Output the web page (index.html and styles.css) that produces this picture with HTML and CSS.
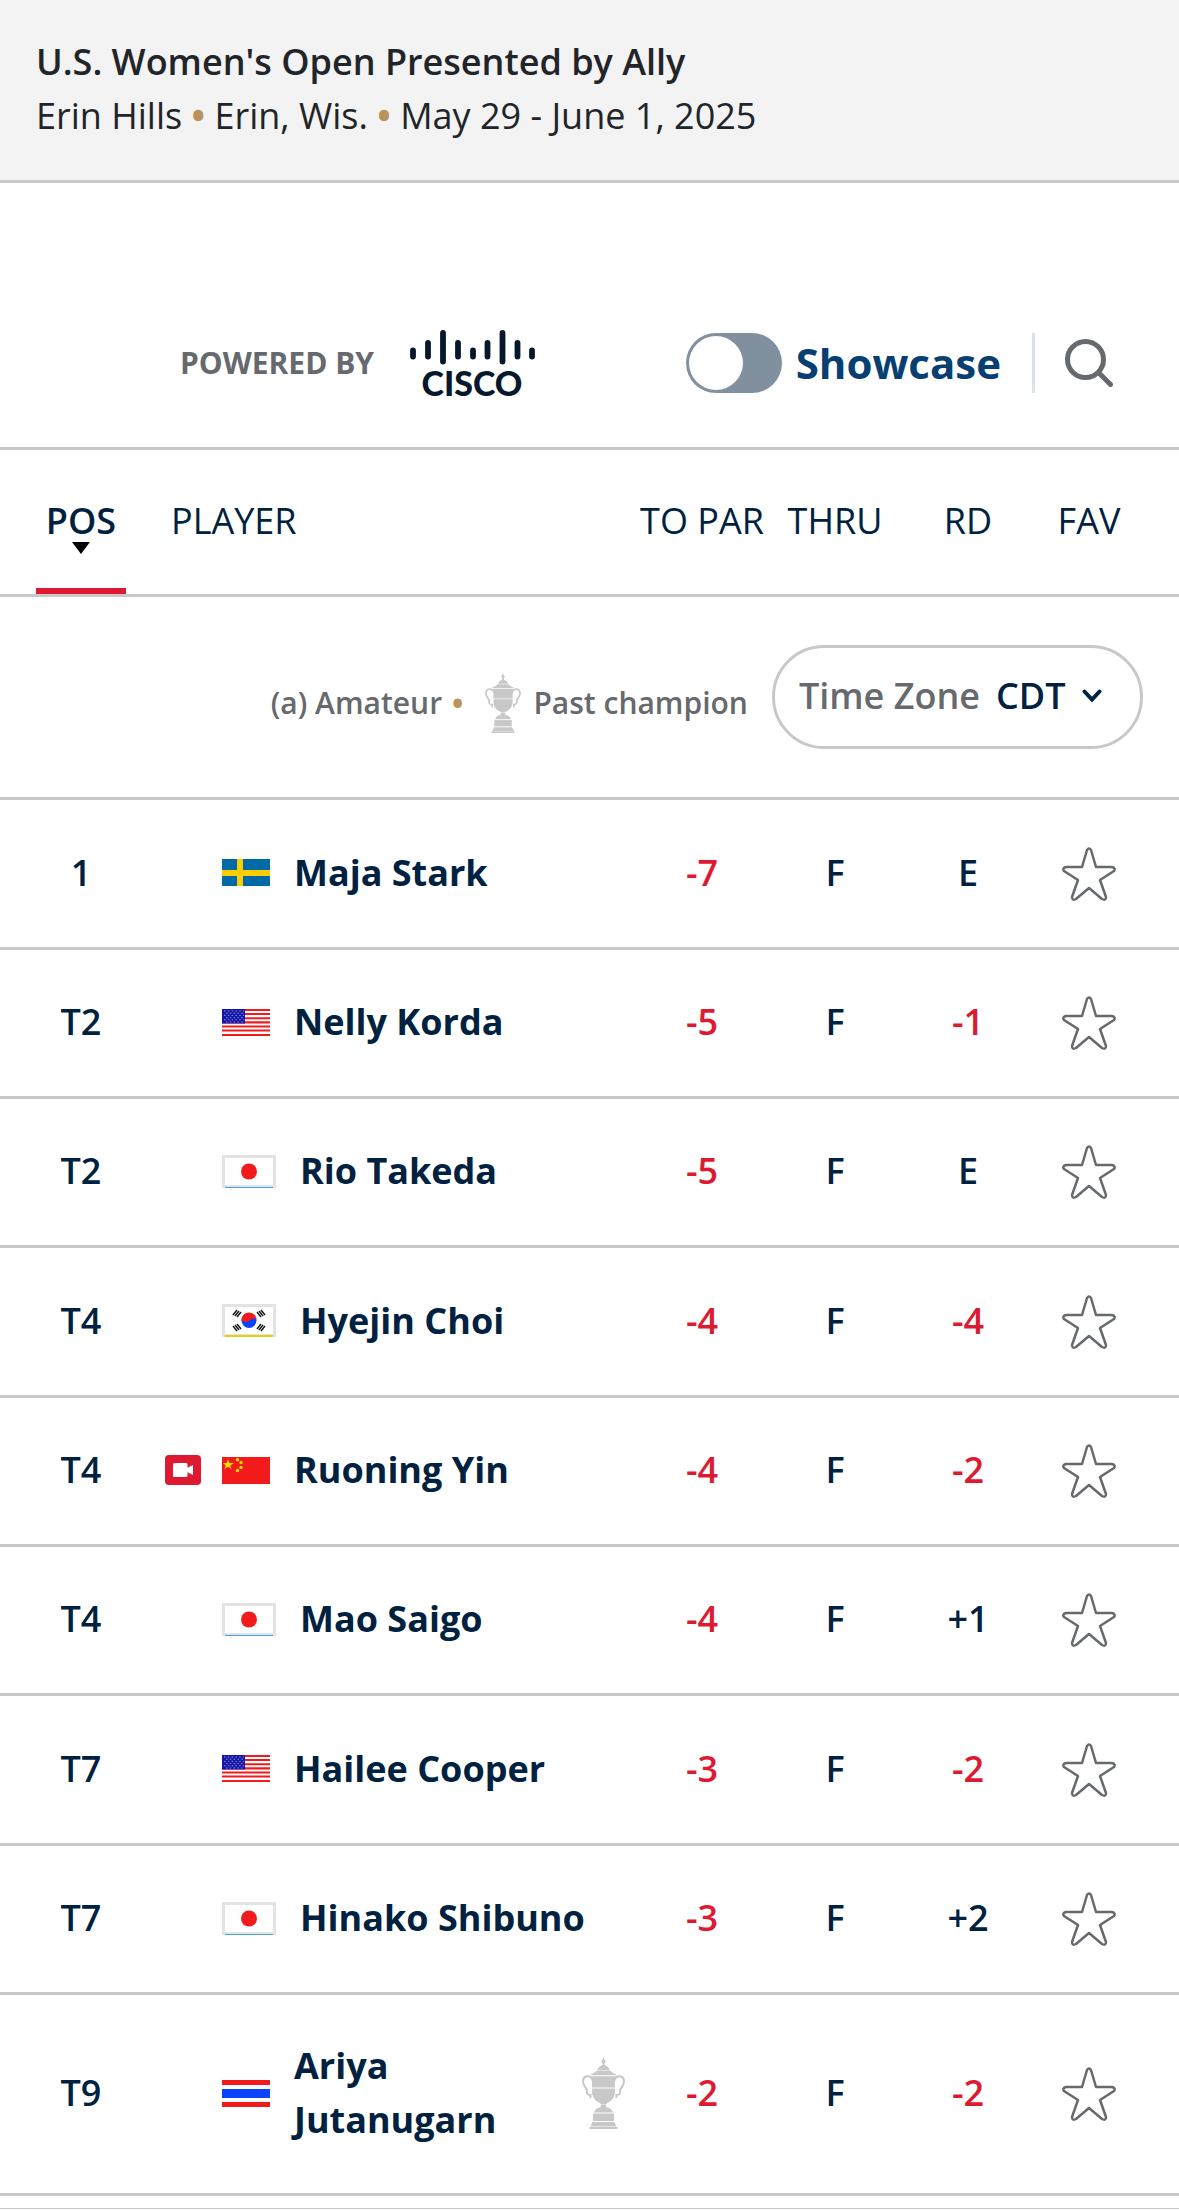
FILE: index.html
```html
<!DOCTYPE html>
<html lang="en">
<head>
    <meta charset="UTF-8">
    <meta name="viewport" content="width=device-width, initial-scale=1.0">
    <title>U.S. Women's Open Leaderboard</title>
    <link rel="stylesheet" href="styles.css">
</head>
<body>
    <!-- shared icons and flags -->
    <svg class="sprite" aria-hidden="true">
        <symbol id="star" viewBox="0 0 54 54">
            <path d="M25 3 Q27 0 29 3 L34 20 L50 20 Q54 21 52 24 L38 33 L44 50 Q44 54 40 52 L27 41 L14 52 Q10 54 10 50 L16 33 L2 24 Q0 21 4 20 L20 20 Z" fill="none" stroke="#66696e" stroke-width="2.5" stroke-linejoin="round"/>
        </symbol>
        <symbol id="trophy" viewBox="0 0 43 72">
            <g fill="#c8c8c8">
                <path d="M21.5 0 L22.4 2.5 L24 4.5 L22.5 6 L22.7 8 Q27 9.500 27.500 13 H15.500 Q16 9.500 20.300 8 L20.500 6 L19 4.500 L20.600 2.500 Z"/>
                <path d="M15 13.600 H28 Q30 16 34 17.200 V18.200 H9 V17.200 Q13 16 15 13.600 Z"/>
                <path d="M9 19.200 H34 L33 22 V30.500 H10 V22 Z"/>
                <path d="M10 31.500 H33 Q34 43 24.500 46.500 L24 47.500 H19 L18.500 46.500 Q9 43 10 31.500 Z"/>
                <path d="M18.500 48 H24.500 L24 50 Q30 51 31 55.500 H12 Q13 51 19 50 Z"/>
                <path d="M11 56.500 H32 V64 H11 Z"/>
                <path d="M10.500 65 H32.500 L34.500 69.500 H8.500 Z"/>
                <path d="M7.500 70 H35.500 V72 H7.500 Z"/>
            </g>
            <path d="M11 24 Q9 18.500 4 19.500 Q0 21 1.500 27 L5 33 Q4 38 8.500 38 M8.500 37 V41 M32 24 Q34 18.500 39 19.500 Q43 21 41.500 27 L38 33 Q39 38 34.500 38 M34.500 37 V41" fill="none" stroke="#c8c8c8" stroke-width="2"/>
        </symbol>
        <symbol id="flag-se" viewBox="0 0 48 27">
            <path fill="#006aa7" d="M0 0H48V27H0z"/>
            <path fill="#fecc00" d="M15 0h6v27h-6zM0 11h48v6H0z"/>
        </symbol>
        <symbol id="flag-us" viewBox="0 0 48 27">
            <path fill="#fff" d="M0 0H48V27H0z"/>
            <path stroke="#f21a1a" stroke-width="2.1" d="M0 1H48M0 5H48M0 9.200H48M0 13.400H48M0 17.500H48M0 21.500H48M0 26H48"/>
            <path fill="#1414a8" d="M0 0H23V14.500H0z"/>
            <path stroke="#8f93dd" stroke-width="1" stroke-dasharray="1.500 2.300" d="M2 2H22M4 4.200H22M2 6.400H22M4 8.600H22M2 10.800H22M4 13H22"/>
        </symbol>
        <symbol id="flag-jp" viewBox="0 0 54 33">
            <path fill="#e2e3e4" d="M0 0H54V33H0z"/>
            <path fill="#fff" d="M3 3H51V30H3z"/>
            <circle cx="27" cy="16.500" r="8" fill="#f21a1a"/>
            <path fill="#4aa3d4" d="M3 32H51V33H3z"/>
        </symbol>
        <symbol id="flag-kr" viewBox="0 0 54 33">
            <path fill="#e2e3e4" d="M0 0H54V33H0z"/>
            <path fill="#fff" d="M3 3H51V30H3z"/>
            <circle cx="27" cy="16.500" r="7.500" fill="#0a44ff"/>
            <path fill="#f21a1a" d="M19.500 16.500 A7.500 7.500 0 0 1 34.500 15.500 Q31 13 27.500 16.500 Q23.500 20 19.500 16.500z"/>
            <g stroke="#111" stroke-width="1.400">
                <path d="M11 11l4-5M13 12l4-5M15 13l4-5M35 8l4 5M37 7l4 5M39 6l4 5M11 22l4 5M13 21l4 5M15 20l4 5M35 25l4-5M37 26l4-5M39 27l4-5"/>
            </g>
            <path fill="#e8cf0c" d="M3 31H51V33H3z"/>
        </symbol>
        <symbol id="flag-cn" viewBox="0 0 48 27">
            <path fill="#f21a1a" d="M0 0H48V27H0z"/>
            <path fill="#ffde00" d="M6 2l1.300 4H12L8.300 8.500 9.600 12 6 9.800 2.400 12l1.300-3.500L1 6h3.700z"/>
            <circle cx="15.500" cy="2.700" r="1.700" fill="#ffde00"/>
            <circle cx="19" cy="5.500" r="1.700" fill="#ffde00"/>
            <circle cx="19" cy="10.500" r="1.700" fill="#ffde00"/>
            <circle cx="15.500" cy="13.500" r="1.700" fill="#ffde00"/>
        </symbol>
        <symbol id="flag-th" viewBox="0 0 48 27">
            <path fill="#fff" d="M0 0H48V27H0z"/>
            <path fill="#f21a1a" d="M0 0H48V5H0zM0 22H48V27H0z"/>
            <path fill="#0a44ff" d="M0 9H48V18H0z"/>
        </symbol>
    </svg>

    <header class="event">
        <h1 class="event-name">U.S. Women's Open Presented by Ally</h1>
        <p class="event-info">Erin Hills <span class="dot">•</span> Erin, Wis. <span class="dot">•</span> May 29 - June 1, 2025</p>
    </header>

    <div class="toolbar">
        <span class="powered">POWERED BY</span>
        <svg class="cisco" viewBox="0 -3 125 72" role="img" aria-label="Cisco">
            <path d="M3 20.500V26.500M18 13V26.500M33 3V31.500M48 13V26.500M63 20.500V26.500M77.500 13V26.500M92.500 3V31.500M107.500 13V26.500M122 20.500V26.500" stroke="#07182d" stroke-width="5.800" stroke-linecap="round"/>
            <text class="cisco-text" x="62" y="66" text-anchor="middle">CISCO</text>
        </svg>
        <label class="showcase">
            <input class="switch" type="checkbox">
            <span>Showcase</span>
        </label>
        <button class="search" type="button" aria-label="Search">
            <svg width="48" height="48" viewBox="0 0 48 48" fill="none" stroke="#66696e">
                <circle cx="20.500" cy="20.500" r="18" stroke-width="5"/>
                <path d="M34.500 34.500L45.500 45.500" stroke-width="5" stroke-linecap="round"/>
            </svg>
        </button>
    </div>

    <table class="board">
        <colgroup>
            <col class="col-pos">
            <col>
            <col class="col-par">
            <col class="col-thru">
            <col class="col-rd">
            <col class="col-fav">
        </colgroup>
        <thead>
            <tr>
                <th class="pos active" scope="col"><span class="sort">POS</span></th>
                <th class="player-head" scope="col">PLAYER</th>
                <th scope="col">TO PAR</th>
                <th scope="col">THRU</th>
                <th scope="col">RD</th>
                <th class="fav" scope="col">FAV</th>
            </tr>
        </thead>
        <tbody>
            <tr>
                <td class="options" colspan="6">
                    <div class="options-row">
                        <div class="legend">
                            <span>(a) Amateur</span>
                            <span class="dot">•</span>
                            <svg class="trophy-small" aria-hidden="true"><use href="#trophy"/></svg>
                            <span>Past champion</span>
                        </div>
                        <div class="timezone">
                            <label for="tz">Time Zone</label>
                            <select id="tz">
                                <option>CDT</option>
                                <option>EDT</option>
                            </select>
                            <svg class="chevron" width="20" height="14" viewBox="0 0 20 14" aria-hidden="true"><path d="M2.500 2.500L10 10.500L17.500 2.500" fill="none" stroke="#00213f" stroke-width="4" stroke-linecap="round"/></svg>
                        </div>
                    </div>
                </td>
            </tr>
        </tbody>
        <tbody class="scores">
            <tr>
                <td class="pos">1</td>
                <td><div class="player"><span class="media"></span><svg class="flag"><use href="#flag-se"/></svg><a href="#">Maja Stark</a></div></td>
                <td class="under">-7</td>
                <td>F</td>
                <td>E</td>
                <td class="fav"><button type="button" aria-label="Favorite Maja Stark"><svg><use href="#star"/></svg></button></td>
            </tr>
            <tr>
                <td class="pos">T2</td>
                <td><div class="player"><span class="media"></span><svg class="flag"><use href="#flag-us"/></svg><a href="#">Nelly Korda</a></div></td>
                <td class="under">-5</td>
                <td>F</td>
                <td class="under">-1</td>
                <td class="fav"><button type="button" aria-label="Favorite Nelly Korda"><svg><use href="#star"/></svg></button></td>
            </tr>
            <tr>
                <td class="pos">T2</td>
                <td><div class="player"><span class="media"></span><svg class="flag framed"><use href="#flag-jp"/></svg><a href="#">Rio Takeda</a></div></td>
                <td class="under">-5</td>
                <td>F</td>
                <td>E</td>
                <td class="fav"><button type="button" aria-label="Favorite Rio Takeda"><svg><use href="#star"/></svg></button></td>
            </tr>
            <tr>
                <td class="pos">T4</td>
                <td><div class="player"><span class="media"></span><svg class="flag framed"><use href="#flag-kr"/></svg><a href="#">Hyejin Choi</a></div></td>
                <td class="under">-4</td>
                <td>F</td>
                <td class="under">-4</td>
                <td class="fav"><button type="button" aria-label="Favorite Hyejin Choi"><svg><use href="#star"/></svg></button></td>
            </tr>
            <tr>
                <td class="pos">T4</td>
                <td><div class="player"><span class="media"><svg width="36" height="30" viewBox="0 0 36 30"><rect width="36" height="30" rx="4" fill="#dd1a32"/><rect x="8" y="8" width="14.500" height="14" rx="1.500" fill="#fff"/><path fill="#fff" d="M22 13L28 10V20L22 17z"/></svg></span><svg class="flag"><use href="#flag-cn"/></svg><a href="#">Ruoning Yin</a></div></td>
                <td class="under">-4</td>
                <td>F</td>
                <td class="under">-2</td>
                <td class="fav"><button type="button" aria-label="Favorite Ruoning Yin"><svg><use href="#star"/></svg></button></td>
            </tr>
            <tr>
                <td class="pos">T4</td>
                <td><div class="player"><span class="media"></span><svg class="flag framed"><use href="#flag-jp"/></svg><a href="#">Mao Saigo</a></div></td>
                <td class="under">-4</td>
                <td>F</td>
                <td>+1</td>
                <td class="fav"><button type="button" aria-label="Favorite Mao Saigo"><svg><use href="#star"/></svg></button></td>
            </tr>
            <tr>
                <td class="pos">T7</td>
                <td><div class="player"><span class="media"></span><svg class="flag"><use href="#flag-us"/></svg><a href="#">Hailee Cooper</a></div></td>
                <td class="under">-3</td>
                <td>F</td>
                <td class="under">-2</td>
                <td class="fav"><button type="button" aria-label="Favorite Hailee Cooper"><svg><use href="#star"/></svg></button></td>
            </tr>
            <tr>
                <td class="pos">T7</td>
                <td><div class="player"><span class="media"></span><svg class="flag framed"><use href="#flag-jp"/></svg><a href="#">Hinako Shibuno</a></div></td>
                <td class="under">-3</td>
                <td>F</td>
                <td>+2</td>
                <td class="fav"><button type="button" aria-label="Favorite Hinako Shibuno"><svg><use href="#star"/></svg></button></td>
            </tr>
            <tr class="tall">
                <td class="pos">T9</td>
                <td><div class="player"><span class="media"></span><svg class="flag"><use href="#flag-th"/></svg><a href="#">Ariya Jutanugarn</a><svg class="trophy"><use href="#trophy"/></svg></div></td>
                <td class="under">-2</td>
                <td>F</td>
                <td class="under">-2</td>
                <td class="fav"><button type="button" aria-label="Favorite Ariya Jutanugarn"><svg><use href="#star"/></svg></button></td>
            </tr>
        </tbody>
    </table>
    <hr class="end-line">
</body>
</html>
```

FILE: styles.css
```css
* {
    box-sizing: border-box;
}
body {
    margin: 0;
    background: #fff;
    color: #00213f;
    font-family: "Open Sans", "Noto Sans", sans-serif;
    font-size: 36px;
    line-height: 54px;
}
button {
    padding: 0;
    border: none;
    background: none;
    cursor: pointer;
}
svg {
    display: block;
    flex: none;
}
.sprite {
    position: absolute;
    width: 0;
    height: 0;
}
.dot {
    color: #b8935a;
    font-weight: 700;
}

/* event header */
.event {
    padding: 35px 36px 37px;
    background: #f3f3f3;
    border-bottom: 3px solid #c8c8c8;
    color: #212529;
}
.event-name {
    margin: 0;
    font-size: 36px;
    font-weight: 600;
}
.event-info {
    margin: 0;
}

/* sponsor, showcase switch and search */
.toolbar {
    display: flex;
    align-items: center;
    padding: 144px 66px 48px 180px;
    border-bottom: 3px solid #c8c8c8;
}
.powered {
    color: #66696e;
    font-size: 30px;
    font-weight: 700;
}
.cisco {
    width: 125px;
    height: 72px;
    margin-left: 36px;
}
.cisco-text {
    fill: #07182d;
    font-family: Lato, sans-serif;
    font-size: 34px;
    font-weight: 900;
}
.showcase {
    display: flex;
    align-items: center;
    gap: 14px;
    margin-left: auto;
    padding-right: 31px;
    color: #073f73;
    font-size: 42px;
    font-weight: 700;
    cursor: pointer;
}
.switch {
    appearance: none;
    display: flex;
    width: 96px;
    height: 60px;
    margin: 0;
    padding: 3px;
    border-radius: 30px;
    background: #81909f;
    cursor: pointer;
}
.switch::before {
    content: "";
    width: 54px;
    height: 54px;
    border-radius: 50%;
    background: #fff;
}
.switch:checked {
    justify-content: flex-end;
    background: #073f73;
}
.search {
    padding: 6px 0 6px 30px;
    border-left: 3px solid #dae3eb;
}

/* leaderboard */
.board {
    width: 100%;
    border-collapse: separate;
    border-spacing: 0;
    table-layout: fixed;
}
.col-pos {
    width: 126px;
}
.col-par,
.col-rd {
    width: 134px;
}
.col-thru {
    width: 132px;
}
.col-fav {
    width: 144px;
}
.board th,
.board td {
    padding: 0;
    border-bottom: 3px solid #c8c8c8;
    text-align: center;
}
.board th {
    height: 147px;
    padding-top: 44px;
    font-weight: 400;
    vertical-align: top;
    white-space: nowrap;
}
.board .pos {
    padding-left: 36px;
}
.board .fav {
    padding-right: 36px;
}
.board .player-head {
    padding-left: 45px;
    text-align: left;
}
.board .active {
    font-weight: 600;
}
.sort {
    display: flex;
    flex-direction: column;
    align-items: center;
    height: 100px;
    border-bottom: 6px solid #dd1a32;
}
.sort::after {
    content: "";
    margin-top: -6px;
    border: 9px solid transparent;
    border-top: 12px solid #000;
    border-bottom: 0;
}

/* legend and time zone */
.board .options {
    height: 203px;
    padding: 0 36px;
}
.options-row {
    display: flex;
    justify-content: flex-end;
    align-items: center;
    gap: 24px;
}
.legend {
    display: flex;
    align-items: center;
    gap: 10px;
    padding-top: 12px;
    color: #66696e;
    font-size: 30px;
    font-weight: 600;
}
.trophy-small {
    width: 36px;
    height: 60px;
    margin: 0 2px 0 12px;
}
.timezone {
    position: relative;
    display: flex;
    align-items: center;
    gap: 16px;
    height: 104px;
    padding: 0 38px 2px 24px;
    border: 3px solid #c8c8c8;
    border-radius: 52px;
    color: #66696e;
    font-weight: 600;
}
.timezone select {
    appearance: none;
    width: 106px;
    padding: 0;
    border: none;
    background: none;
    color: #00213f;
    font: inherit;
}
.chevron {
    position: absolute;
    right: 38px;
    pointer-events: none;
}

/* player rows */
.scores td {
    height: 149px;
    padding-bottom: 2px;
    font-weight: 600;
}
.scores tr:nth-child(3n+1) td {
    height: 150px;
}
.scores .tall td {
    height: 201px;
}
.scores .under {
    color: #dd1a32;
}
.player {
    display: flex;
    align-items: center;
    padding-left: 39px;
    padding-right: 10px;
    text-align: left;
}
.player a {
    flex: 1;
    color: #00213f;
    font-weight: 700;
    text-decoration: none;
}
.media {
    width: 36px;
    margin-right: 21px;
}
.flag {
    width: 48px;
    height: 27px;
    margin-right: 24px;
}
.framed {
    width: 54px;
    height: 33px;
}
.trophy {
    width: 43px;
    height: 72px;
}
.scores .fav {
    padding-bottom: 0;
}
.fav button {
    display: block;
    margin: 0 auto;
}
.fav svg {
    width: 54px;
    height: 54px;
}
.end-line {
    margin: 12px 0 0;
    border: 0;
    border-top: 1px solid #c8c8c8;
}
```
